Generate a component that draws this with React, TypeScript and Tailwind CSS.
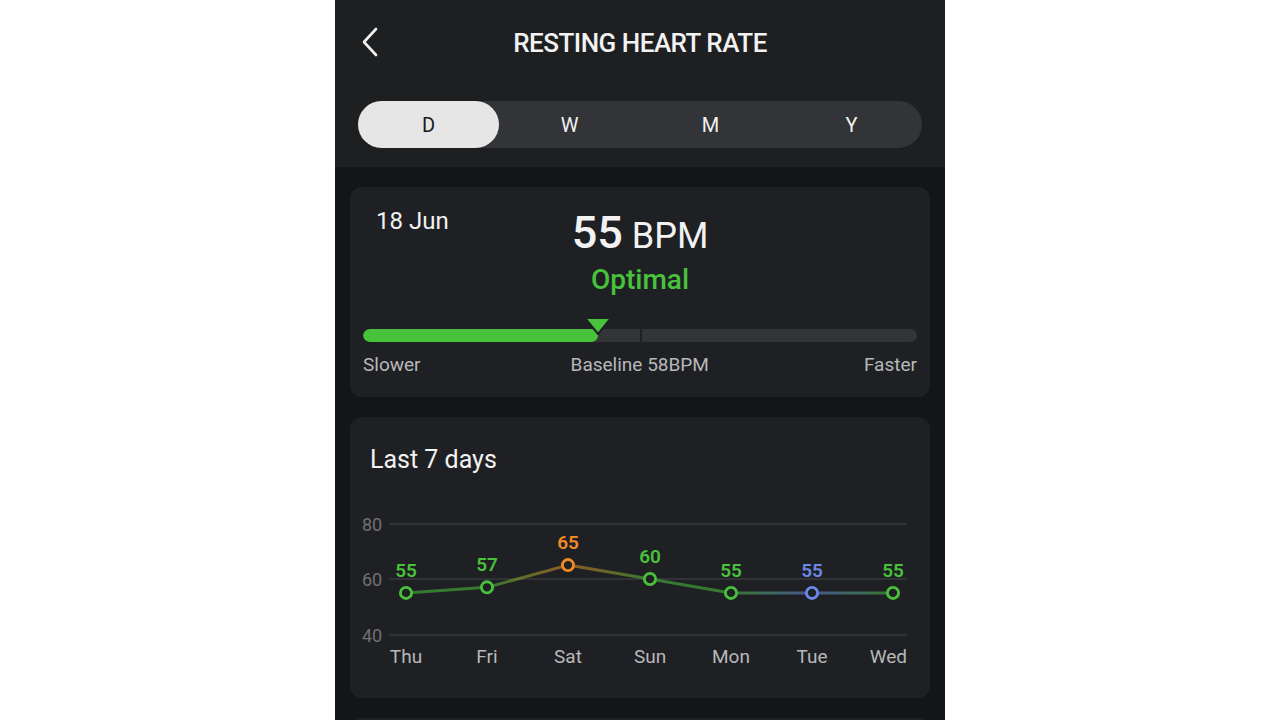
import React from "react";

const GREEN = "#48c23b";
const ORANGE = "#f08a25";
const BLUE = "#6b87ea";

type P = { day: string; v: number; c: string };
const pts: P[] = [
  { day: "Thu", v: 55, c: GREEN },
  { day: "Fri", v: 57, c: GREEN },
  { day: "Sat", v: 65, c: ORANGE },
  { day: "Sun", v: 60, c: GREEN },
  { day: "Mon", v: 55, c: GREEN },
  { day: "Tue", v: 55, c: BLUE },
  { day: "Wed", v: 55, c: GREEN },
];

const xs = [56, 137, 218, 300, 381, 462, 543];
const yOf = (v: number) => 91 + (60 - v) * 2.78;

function Chart() {
  return (
    <svg width="580" height="190" viewBox="0 0 580 190" className="block">
      <defs>
        {pts.slice(0, -1).map((p, i) => (
          <linearGradient
            key={i}
            id={`g${i}`}
            gradientUnits="userSpaceOnUse"
            x1={xs[i]}
            y1="0"
            x2={xs[i + 1]}
            y2="0"
          >
            <stop offset="0" stopColor={p.c} />
            <stop offset="1" stopColor={pts[i + 1].c} />
          </linearGradient>
        ))}
      </defs>
      {[
        { y: 36, l: "80", b: 43 },
        { y: 91, l: "60", b: 98 },
        { y: 147, l: "40", b: 154 },
      ].map((g) => (
        <g key={g.l}>
          <line x1="39" x2="557" y1={g.y} y2={g.y} stroke="#38393c" strokeWidth="1.5" />
          <text x="12" y={g.b} fill="#6f7073" fontSize="18" fontFamily="Roboto, sans-serif">
            {g.l}
          </text>
        </g>
      ))}
      {pts.slice(0, -1).map((p, i) => (
        <line
          key={i}
          x1={xs[i]}
          y1={yOf(p.v)}
          x2={xs[i + 1]}
          y2={yOf(pts[i + 1].v)}
          stroke={`url(#g${i})`}
          strokeWidth="3"
          strokeOpacity="0.55"
        />
      ))}
      {pts.map((p, i) => (
        <g key={p.day}>
          <circle cx={xs[i]} cy={yOf(p.v)} r="5.6" fill="#1f2023" stroke={p.c} strokeWidth="2.8" />
          <text
            x={xs[i]}
            y={yOf(p.v) - 16}
            fill={p.c}
            fontSize="19"
            fontWeight="600"
            textAnchor="middle"
            fontFamily="Roboto, sans-serif"
          >
            {p.v}
          </text>
          <text
            x={i === 6 ? 557 : xs[i]}
            y="175"
            fill="#b7b8ba"
            fontSize="19"
            textAnchor={i === 6 ? "end" : "middle"}
            fontFamily="Roboto, sans-serif"
          >
            {p.day}
          </text>
        </g>
      ))}
    </svg>
  );
}

export default function App() {
  return (
    <div className="w-full h-[720px] overflow-hidden bg-white" style={{ fontFamily: "Roboto, 'Noto Sans', sans-serif" }}>
      <div className="mx-auto w-[610px] h-full bg-[#141516] flex flex-col">
        {/* Header */}
        <div className="shrink-0 bg-[#1e1f21] h-[167px] flex flex-col px-[23px]">
          <div className="relative h-[86px] flex items-center justify-center">
            <svg
              width="20"
              height="30"
              viewBox="0 0 20 30"
              className="absolute left-[2px] top-[27px]"
            >
              <polyline points="16,2 4,15 16,28" fill="none" stroke="#f2f2f2" strokeWidth="2.6" strokeLinecap="round" strokeLinejoin="round" />
            </svg>
            <span className="text-[26px] font-medium tracking-[-0.5px] text-[#f2f2f2] leading-none">
              RESTING HEART RATE
            </span>
          </div>
          <div className="mt-[15px] h-[47px] rounded-full bg-[#333437] grid grid-cols-4 text-[20px] text-[#f0f0f0]">
            <div className="rounded-full bg-[#e6e6e6] text-[#1a1a1a] flex items-center justify-center">D</div>
            <div className="flex items-center justify-center">W</div>
            <div className="flex items-center justify-center">M</div>
            <div className="flex items-center justify-center">Y</div>
          </div>
        </div>

        {/* Body */}
        <div className="shrink-0 px-[15px] pt-[20px] flex flex-col gap-[20px]">
          {/* Card 1 */}
          <div className="rounded-[12px] bg-[#1f2023] px-[13px] pt-[20px] pb-[20px]">
            <div className="grid grid-cols-[1fr_auto_1fr]">
              <div className="pl-[13px] text-[24px] leading-[28px] text-[#f2f2f2]">18 Jun</div>
              <div className="flex flex-col items-center">
                <div className="leading-[52px] text-[#f2f2f2]">
                  <span className="text-[45px] font-medium">55</span>
                  <span className="text-[36px] ml-[9px]">BPM</span>
                </div>
                <div className="-mt-[7px] text-[28px] font-medium leading-[36px] text-[#48c23b]">Optimal</div>
              </div>
              <div />
            </div>
            <div className="relative mt-[21px] h-[23px]">
              <div className="absolute left-0 right-0 bottom-0 h-[13px] rounded-full bg-[#333437] overflow-hidden flex">
                <div className="w-[235px] bg-[#48c23b] rounded-full" />
                <div className="ml-[42px] w-[2px] bg-[#1f2023]" />
              </div>
              <svg width="30" height="20" viewBox="0 0 30 20" className="absolute left-[220px] top-[-3px]">
                <polygon points="2,2 28,2 15,18" fill="#48c23b" stroke="#1f2023" strokeWidth="2" strokeLinejoin="round" />
              </svg>
            </div>
            <div className="mt-[11px] flex justify-between text-[19px] leading-[24px] text-[#b7b8ba]">
              <span>Slower</span>
              <span className="-ml-[5px]">Baseline 58BPM</span>
              <span>Faster</span>
            </div>
          </div>

          {/* Card 2 */}
          <div className="rounded-[12px] bg-[#1f2023] pt-[29px] pb-[20px]">
            <div className="px-[20px] text-[25px] leading-[28px] text-[#f2f2f2]">Last 7 days</div>
            <div className="mt-[14px]">
              <Chart />
            </div>
          </div>

          {/* Card 3 (partially visible) */}
          <div className="rounded-[12px] bg-[#1f2023] h-[120px]" />
        </div>
      </div>
    </div>
  );
}
